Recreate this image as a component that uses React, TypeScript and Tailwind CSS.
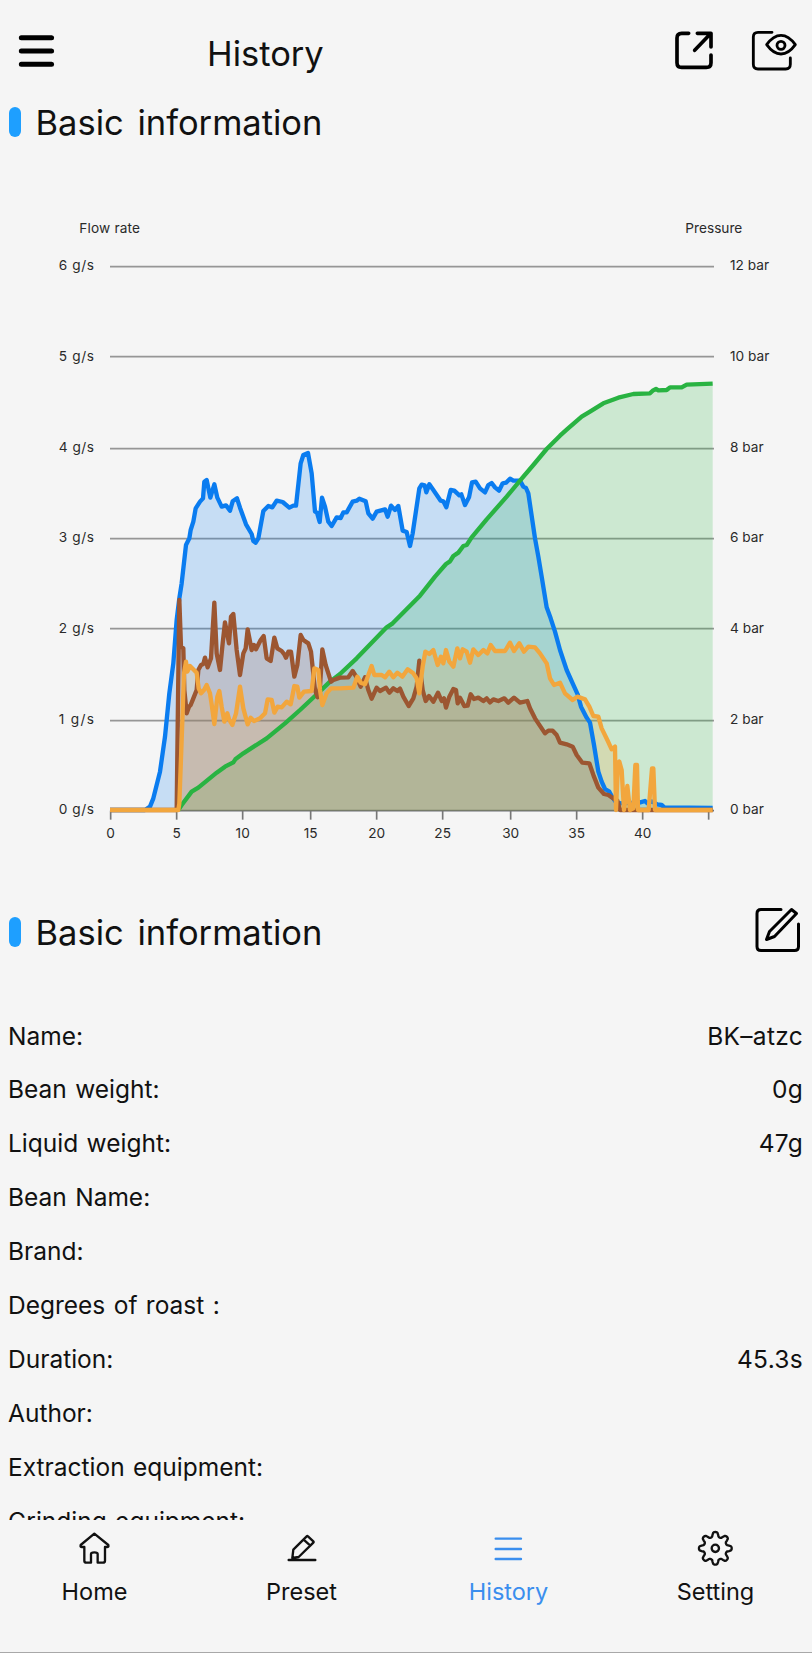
import type { ReactNode } from 'react';

// Chart coordinates: three units per CSS pixel
const PLOT = { left: 330, right: 2142, bottom: 2432 };

const GRID_LINES = [800, 1070, 1346, 1616, 1886, 2162];

const X_TICKS = [
  { x: 332, label: '0' },
  { x: 530, label: '5' },
  { x: 728, label: '10' },
  { x: 932, label: '15' },
  { x: 1130, label: '20' },
  { x: 1328, label: '25' },
  { x: 1532, label: '30' },
  { x: 1730, label: '35' },
  { x: 1928, label: '40' },
  { x: 2126, label: '' },
];

const SERIES = [
  {
    name: 'pressure',
    color: '#0a7cf0',
    points:
      '330,2430 435,2430 450,2420 460,2395 480,2315 495,2210 508,2080 520,1990 530,1860 538,1795 545,1750 558,1635 568,1615 572,1590 580,1565 587,1525 600,1505 609,1495 613,1445 620,1440 631,1493 643,1453 652,1493 665,1520 678,1516 690,1532 698,1504 711,1495 720,1523 738,1573 755,1602 760,1623 767,1628 775,1615 790,1533 805,1518 817,1522 830,1502 848,1506 868,1523 880,1517 888,1517 902,1390 910,1365 924,1359 935,1420 945,1535 951,1538 959,1566 966,1493 975,1520 985,1565 995,1578 1010,1552 1022,1554 1030,1537 1040,1537 1058,1505 1070,1502 1078,1496 1097,1504 1105,1540 1118,1556 1130,1535 1155,1528 1163,1550 1173,1517 1185,1530 1195,1518 1208,1592 1220,1596 1230,1638 1238,1600 1258,1465 1265,1454 1274,1456 1279,1477 1288,1453 1300,1470 1322,1502 1330,1504 1339,1522 1352,1470 1363,1472 1378,1486 1384,1483 1395,1515 1407,1492 1416,1447 1427,1445 1440,1465 1455,1477 1465,1455 1475,1449 1485,1462 1497,1472 1508,1450 1518,1448 1530,1436 1540,1442 1560,1442 1570,1460 1578,1464 1585,1480 1605,1615 1615,1670 1625,1730 1640,1822 1652,1855 1665,1895 1680,1950 1700,2010 1718,2050 1733,2083 1743,2120 1760,2153 1770,2168 1782,2235 1795,2315 1805,2345 1815,2367 1828,2375 1835,2388 1850,2410 1918,2408 1935,2403 1942,2410 1955,2404 1972,2413 1985,2415 1993,2422 2138,2424',
  },
  {
    name: 'weight',
    color: '#29b342',
    points:
      '535,2430 545,2415 575,2375 595,2363 650,2318 675,2300 700,2287 706,2278 730,2260 800,2215 855,2170 900,2130 945,2088 990,2045 1020,2022 1070,1975 1160,1882 1178,1870 1260,1787 1305,1730 1338,1692 1350,1684 1360,1668 1375,1658 1390,1638 1400,1635 1415,1612 1460,1558 1520,1490 1560,1442 1600,1395 1640,1347 1680,1307 1700,1289 1745,1250 1770,1235 1810,1210 1855,1193 1900,1182 1950,1180 1958,1172 1968,1167 1975,1171 2000,1170 2010,1162 2045,1162 2060,1154 2138,1151',
  },
  {
    name: 'pump flow',
    color: '#9c5631',
    points:
      '330,2430 530,2430 534,2100 538,1800 543,1940 550,1945 553,2070 560,2140 567,2120 572,2115 580,2095 590,2070 595,2010 603,1995 610,1992 615,1973 623,2002 633,1975 638,1890 643,1808 650,1960 660,2010 668,1930 675,1867 687,1930 693,1850 700,1842 710,1950 720,2025 730,1960 737,1945 743,1888 755,1950 762,1935 768,1948 782,1920 791,1908 800,1975 812,1983 823,1913 832,1945 845,1953 853,1963 858,1973 865,1955 873,1955 883,2030 892,1995 902,1905 910,1920 925,1930 933,1955 945,2070 953,2092 960,2060 967,1948 977,1995 993,2045 1000,2040 1020,2033 1045,2032 1058,2013 1070,2032 1082,2060 1095,2032 1105,2070 1115,2096 1130,2063 1140,2073 1158,2063 1168,2078 1180,2065 1192,2073 1200,2066 1210,2090 1226,2118 1240,2095 1250,2060 1258,1982 1263,2030 1268,2070 1277,2103 1287,2088 1300,2105 1314,2078 1325,2103 1332,2095 1338,2123 1348,2090 1360,2067 1368,2070 1373,2110 1380,2093 1393,2118 1403,2117 1412,2083 1422,2097 1435,2093 1450,2103 1460,2095 1470,2107 1480,2098 1495,2103 1513,2095 1525,2108 1542,2093 1560,2108 1582,2103 1590,2125 1605,2155 1635,2200 1645,2192 1658,2192 1670,2205 1680,2228 1700,2233 1718,2240 1730,2265 1747,2288 1768,2290 1782,2330 1795,2363 1812,2382 1825,2385 1840,2395 1852,2402 1860,2430 2138,2430',
  },
  {
    name: 'flow rate',
    color: '#f2a63d',
    points:
      '330,2430 535,2430 538,2410 545,2220 552,2020 558,1985 562,2015 570,1998 582,2010 590,2018 596,2065 603,2080 612,2070 620,2055 630,2080 636,2120 643,2172 652,2090 658,2073 665,2120 673,2165 682,2140 688,2160 697,2175 708,2140 720,2060 730,2125 743,2173 752,2153 762,2163 780,2155 795,2140 803,2098 815,2100 823,2138 833,2120 845,2122 860,2105 872,2113 883,2058 892,2060 898,2093 912,2075 935,2073 943,2005 955,2010 960,2070 967,2115 980,2080 993,2065 1020,2065 1060,2063 1072,2030 1082,2048 1095,2053 1107,2020 1115,1998 1123,2025 1145,2025 1155,2032 1168,2015 1180,2032 1192,2018 1207,2030 1223,2008 1240,2020 1250,2035 1258,2080 1268,2000 1276,1955 1288,1962 1300,1950 1313,1995 1323,1970 1330,1990 1338,1950 1348,1985 1360,2000 1372,1945 1380,1975 1388,1948 1400,1955 1410,1988 1420,1948 1435,1965 1450,1950 1462,1960 1472,1935 1485,1953 1515,1953 1530,1928 1542,1953 1558,1930 1572,1955 1585,1940 1605,1942 1620,1960 1640,1990 1650,2035 1662,2055 1680,2048 1695,2080 1718,2100 1732,2090 1755,2098 1768,2120 1780,2148 1795,2150 1805,2185 1822,2220 1835,2248 1845,2240 1848,2430 1854,2290 1858,2285 1865,2310 1872,2430 1882,2358 1890,2430 1900,2425 1906,2295 1911,2295 1914,2430 1946,2430 1956,2305 1960,2305 1965,2430 2138,2430',
  },
];

const INFO_ROWS = [
  { label: 'Name:', value: 'BK–atzc' },
  { label: 'Bean weight:', value: '0g' },
  { label: 'Liquid weight:', value: '47g' },
  { label: 'Bean Name:', value: '' },
  { label: 'Brand:', value: '' },
  { label: 'Degrees of roast :', value: '' },
  { label: 'Duration:', value: '45.3s' },
  { label: 'Author:', value: '' },
  { label: 'Extraction equipment:', value: '' },
  { label: 'Grinding equipment:', value: '' },
];

const GEAR_OUTLINE = Array.from({ length: 96 }, (_, i) => {
  const a = (i / 96) * Math.PI * 2;
  const r = 42 + 7.5 * Math.tanh(1.8 * Math.cos(8 * a));
  return `${(55 + r * Math.cos(a)).toFixed(1)},${(55 + r * Math.sin(a)).toFixed(1)}`;
}).join(' ');

function areaPoints(points: string) {
  const list = points.split(' ');
  const first = list[0].split(',')[0];
  const last = list[list.length - 1].split(',')[0];
  return `${first},${PLOT.bottom} ${points} ${last},${PLOT.bottom}`;
}

function BrewChart() {
  return (
    <svg
      viewBox="0 600 2436 1950"
      className="block h-[650px] w-[812px] shrink-0"
      fontFamily="Inter, sans-serif"
      fontSize="41"
      fill="#2a2a2a"
    >
      {GRID_LINES.map((y) => (
        <line key={y} x1={PLOT.left} x2={PLOT.right} y1={y} y2={y} stroke="#969696" strokeWidth="5" />
      ))}
      <line x1={PLOT.left} x2={PLOT.right} y1={PLOT.bottom} y2={PLOT.bottom} stroke="#6e7079" strokeWidth="5" />
      {X_TICKS.map((t) => (
        <g key={t.x}>
          <line x1={t.x} x2={t.x} y1="2432" y2="2459" stroke="#777" strokeWidth="5" />
          <text x={t.x} y="2514" textAnchor="middle">{t.label}</text>
        </g>
      ))}

      {/* areas sit below every line */}
      {SERIES.map((s) => (
        <polygon key={s.name} points={areaPoints(s.points)} fill={s.color} fillOpacity="0.2" />
      ))}
      {SERIES.map((s) => (
        <polyline
          key={s.name}
          points={s.points}
          fill="none"
          stroke={s.color}
          strokeWidth="13"
          strokeLinejoin="round"
        />
      ))}

      <text x="238" y="698" textLength="182">Flow rate</text>
      <text x="2056" y="698" textLength="171">Pressure</text>
      {[6, 5, 4, 3, 2, 1, 0].map((n, i) => (
        <g key={n}>
          <text x="176" y={811 + i * 272} textLength="106">{n} g/s</text>
          <text x="2190" y={811 + i * 272}>{n * 2} bar</text>
        </g>
      ))}
    </svg>
  );
}

function SectionTitle({ children }: { children: ReactNode }) {
  return (
    <div className="flex items-center gap-[15px]">
      <span className="h-[30px] w-3 rounded-full bg-[#1e9fff]" />
      <h2 className="pt-0.5 text-[34.5px] leading-10 [word-spacing:4px]">{children}</h2>
    </div>
  );
}

function NavItem({ label, active, children }: { label: string; active?: boolean; children: ReactNode }) {
  return (
    <button
      className={`flex w-[207px] shrink-0 flex-col items-center ${active ? 'text-[#3a8eee]' : 'text-[#111]'}`}
    >
      <svg
        viewBox="0 0 110 110"
        className="h-[36.67px] w-[36.67px]"
        fill="none"
        stroke="currentColor"
        strokeWidth="7"
        strokeLinecap="round"
        strokeLinejoin="round"
      >
        {children}
      </svg>
      <span className="mt-[9px] text-[23.5px] leading-8">{label}</span>
    </button>
  );
}

export default function App() {
  return (
    <div className="flex h-[1653px] w-[812px] flex-col overflow-hidden border-b border-[#a8a8a8] bg-[#f5f5f5] font-['Inter',sans-serif] text-[#111]">
      <header className="flex h-[101px] shrink-0 items-start">
        <svg viewBox="0 0 111 100" className="mt-[34px] ml-[18px] h-[33.33px] w-[37px]" stroke="#000" strokeWidth="15" strokeLinecap="round">
          <path d="M10 11H101M10 51H101M10 91H101" />
        </svg>
        <h1 className="mt-[34px] ml-[152px] text-[34.5px] leading-10">History</h1>
        <div className="mt-[30px] mr-[15px] ml-auto flex gap-[37px]">
          <svg viewBox="804 90 120 120" className="size-10" fill="none" stroke="#000" strokeWidth="11" strokeLinecap="round" strokeLinejoin="round">
            <path d="M848 100H827Q813 100 813 114V188Q813 202 827 202H901Q915 202 915 188V165" />
            <path d="M874 100H915V141M912 103L866 151" />
          </svg>
          <svg viewBox="1037 90 138 120" className="h-10 w-[46px] overflow-visible" fill="none" stroke="#000" strokeWidth="8.5" strokeLinecap="round" strokeLinejoin="round">
            <path d="M1100 97H1058Q1044 97 1044 111V193Q1044 207 1058 207H1141Q1155 207 1155 193V174" />
            <path d="M1084 134Q1104 106 1127 106T1170 134Q1150 162 1127 162T1084 134Z" />
            <circle cx="1127" cy="136" r="12" />
          </svg>
        </div>
      </header>

      <section className="shrink-0 pl-[8.5px]">
        <SectionTitle>Basic information</SectionTitle>
      </section>

      <div className="mt-[57px] shrink-0">
        <BrewChart />
      </div>

      <section className="mt-[57px] flex h-[50px] shrink-0 items-center justify-between pr-2.5 pl-[8.5px]">
        <SectionTitle>Basic information</SectionTitle>
        <svg viewBox="755 907 47 47" className="mb-1 size-[47px]" fill="none" stroke="#000" strokeWidth="3" strokeLinecap="round" strokeLinejoin="round">
          <path d="M781 909.500H761Q757 909.500 757 913.500V946.500Q757 950.500 761 950.500H794.500Q798.500 950.500 798.500 946.500V924" />
          <path d="M766.500 939.500L769.500 931.500L791.500 909.500L796.500 913.500L774.500 936.500Z" />
        </svg>
      </section>

      <dl className="mt-[52px] min-h-0 flex-1 overflow-hidden pr-[9px] pl-2 text-[24.5px] [word-spacing:1.5px]">
        {INFO_ROWS.map((row) => (
          <div key={row.label} className="flex h-[53.9px] items-center justify-between">
            <dt>{row.label}</dt>
            <dd className="tracking-[0.3px]">{row.value}</dd>
          </div>
        ))}
      </dl>

      <nav className="-ml-[9px] flex h-[132px] shrink-0 items-start pt-2.5">
        <NavItem label="Home">
          <path d="M55 11L14 45Q12 51 18 51H25V92Q25 98 31 98H45V72Q45 67 55 67T65 72V98H81Q87 98 87 92V51H93Q99 51 97 45Z" />
        </NavItem>
        <NavItem label="Preset">
          <path d="M17 90H97M28 84L31 59L71 19Q73 17 75 19L91 34Q93 36 91 38L47 81ZM62 29L82 47" />
        </NavItem>
        <NavItem label="History" active>
          <path d="M17 26H93M17 57H93M17 87H93" />
        </NavItem>
        <NavItem label="Setting">
          <polygon points={GEAR_OUTLINE} />
          <circle cx="55" cy="55" r="11" />
        </NavItem>
      </nav>
    </div>
  );
}
